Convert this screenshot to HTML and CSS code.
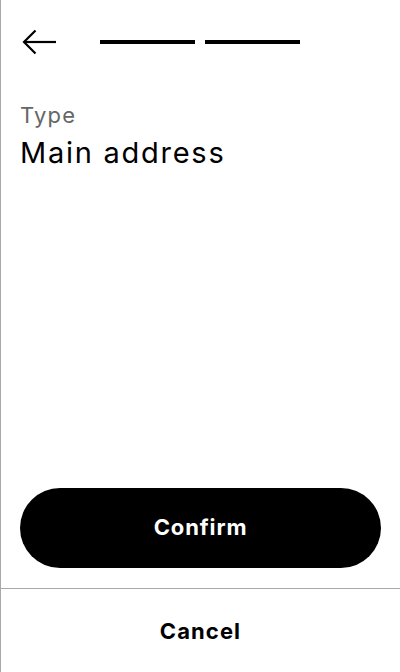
FILE: index.html
```
<!DOCTYPE html>
<html>
<head>
<meta charset="utf-8">
<link rel="stylesheet" href="styles.css">
</head>
<body>
<div class="screen">
  <header class="header">
    <svg class="back" width="40" height="40" viewBox="0 0 40 40" fill="none" stroke="#000" stroke-width="2.2">
      <path d="M4 20 H36"/>
      <path d="M15.5 8.5 L4 20 L15.5 31.5"/>
    </svg>
    <div class="steps">
      <span class="step"></span>
      <span class="step"></span>
    </div>
  </header>
  <main class="content">
    <div class="label">Type</div>
    <div class="value">Main address</div>
  </main>
  <div class="actions">
    <button class="confirm">Confirm</button>
  </div>
  <footer class="footer">
    <button class="cancel">Cancel</button>
  </footer>
</div>
</body>
</html>
```
FILE: styles.css
```
html, body {
  margin: 0;
  padding: 0;
  background: #fff;
}
body {
  font-family: Inter, "Noto Sans", sans-serif;
  color: #000;
}
.screen {
  height: 672px;
  box-sizing: border-box;
  border-left: 1px solid #a8a8a8;
  display: flex;
  flex-direction: column;
}
.header {
  display: flex;
  align-items: center;
  padding: 22px 19px 0;
  height: 40px;
}
.back {
  display: block;
  flex: none;
}
.steps {
  display: flex;
  gap: 10px;
  margin-left: 40px;
}
.step {
  display: block;
  width: 95px;
  height: 4px;
  background: #000;
}
.content {
  flex: 1;
  padding: 39px 19px 0;
}
.label {
  font-size: 22px;
  line-height: 28px;
  color: #666;
  letter-spacing: 0.055em;
}
.value {
  font-size: 29px;
  line-height: 36px;
  margin-top: 6px;
  letter-spacing: 0.06em;
}
.actions {
  padding: 0 19px 20px;
}
.confirm {
  display: block;
  width: 100%;
  height: 80px;
  border: none;
  border-radius: 40px;
  background: #000;
  color: #fff;
  font-family: Inter, "Noto Sans", sans-serif;
  font-weight: 700;
  font-size: 22px;
  letter-spacing: 0.04em;
  padding: 0 0 2px;
}
.footer {
  border-top: 1px solid #a8a8a8;
  height: 83px;
  display: flex;
  align-items: center;
  justify-content: center;
}
.cancel {
  border: none;
  background: none;
  font-family: Inter, "Noto Sans", sans-serif;
  font-weight: 700;
  font-size: 22px;
  letter-spacing: 0.05em;
  color: #000;
  padding: 0;
}
```
